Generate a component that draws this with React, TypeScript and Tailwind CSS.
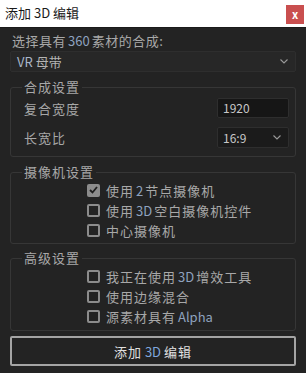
import React from "react";

const FONT = { fontFamily: '"Noto Sans CJK SC", "Noto Sans", sans-serif' };

function Chevron() {
  return (
    <svg width="8" height="5" viewBox="0 0 8 5" className="shrink-0">
      <polyline points="0.5,0.5 4,4 7.5,0.5" fill="none" stroke="#9a9a9a" strokeWidth="1.1" />
    </svg>
  );
}

function Check({ checked, label }: { checked?: boolean; label: React.ReactNode }) {
  return (
    <div className="flex h-5 items-center gap-[6px] pl-[65px]">
      {checked ? (
        <span className="flex h-[13px] w-[13px] items-center justify-center rounded-[2px] bg-[#8c8c8c]">
          <svg width="9" height="8" viewBox="0 0 9 8">
            <polyline points="1,4 3.5,6.5 8,1" fill="none" stroke="#1e1e1e" strokeWidth="1.8" />
          </svg>
        </span>
      ) : (
        <span className="h-[13px] w-[13px] rounded-[2px] border-2 border-[#8c8c8c]" />
      )}
      <span className="text-[13px] leading-none tracking-[1px] text-[#a8a8a8]">{label}</span>
    </div>
  );
}

// latin bits pick up a faint blue cast in the original
function Latin({ children }: { children: React.ReactNode }) {
  return <span className="mx-[2px] tracking-normal text-[#8ea2bf]">{children}</span>;
}

function Group({ title, className, children }: { title: string; className?: string; children: React.ReactNode }) {
  return (
    <fieldset className={`rounded-[3px] border border-[#363636] pl-[11px] pr-[6px] ${className ?? ""}`}>
      <legend className="h-4 px-[2px] text-[13px] leading-4 tracking-[1px] text-[#a8a8a8]">{title}</legend>
      {children}
    </fieldset>
  );
}

export default function App() {
  return (
    <div className="flex h-[373px] w-[306px] flex-col bg-[#232323]" style={FONT}>
      {/* title bar */}
      <div className="flex h-[28px] items-start justify-between border-b border-[#1a1a1a] bg-white pl-[5px] pr-[2px]">
        <span className="mt-[5px] text-[13px] leading-4 text-[#1a1a1a]">添加 3D 编辑</span>
        <span className="mt-[5px] flex h-[19px] w-[18px] items-center justify-center bg-[#c94f4f] text-[11px] font-bold leading-none text-white">x</span>
      </div>

      <div className="flex flex-col px-[10px]">
        <div className="mt-[5px] h-4 pl-[2px] text-[13px] leading-4 tracking-[0.5px] text-[#a8a8a8]">
          选择具有<Latin>360</Latin>素材的合成:
        </div>
        <div className="mt-[2px] flex h-[21px] items-center justify-between rounded-[2px] border border-[#2e2e2e] bg-[#272727] pl-[6px] pr-[7px]">
          <span className="text-[13px] leading-none text-[#b4b4b4]">
            <span className="text-[#a9b6c8]">VR</span> 母带
          </span>
          <Chevron />
        </div>

        <Group title="合成设置" className="mt-[7px] pb-[8px]">
          <div className="mt-[3px] flex items-center justify-between pl-[2px]">
            <span className="text-[13px] leading-none tracking-[1px] text-[#a8a8a8]">复合宽度</span>
            <div className="flex h-5 w-[72px] items-center rounded-[2px] border border-[#2e2e2e] bg-[#161616] pl-[5px] text-[12px] leading-none text-[#c8c8c8]">
              1920
            </div>
          </div>
          <div className="mt-[9px] flex items-center justify-between pl-[2px]">
            <span className="text-[13px] leading-none tracking-[1px] text-[#a8a8a8]">长宽比</span>
            <div className="flex h-[21px] w-[72px] items-center justify-between rounded-[2px] border border-[#2e2e2e] bg-[#1b1b1b] pl-[5px] pr-[7px] text-[12px] leading-none text-[#c8c8c8]">
              16:9
              <Chevron />
            </div>
          </div>
        </Group>

        <Group title="摄像机设置" className="mt-[7px] pb-[3px]">
          <Check checked label={<>使用<Latin>2</Latin>节点摄像机</>} />
          <Check label={<>使用<Latin>3D</Latin>空白摄像机控件</>} />
          <Check label="中心摄像机" />
        </Group>

        <Group title="高级设置" className="mt-[6px] pb-[4px]">
          <Check label={<>我正在使用<Latin>3D</Latin>增效工具</>} />
          <Check label="使用边缘混合" />
          <Check label={<>源素材具有<Latin>Alpha</Latin></>} />
        </Group>

        <button className="mt-[5px] flex h-[30px] items-center justify-center rounded-[2px] border-2 border-[#a4a4a4] bg-[#232323] text-[13px] leading-none tracking-[1px] text-[#e0e0e0]">
          添加<span className="mx-[3px] tracking-normal text-[#7fa6dc]">3D</span>编辑
        </button>
      </div>
    </div>
  );
}
